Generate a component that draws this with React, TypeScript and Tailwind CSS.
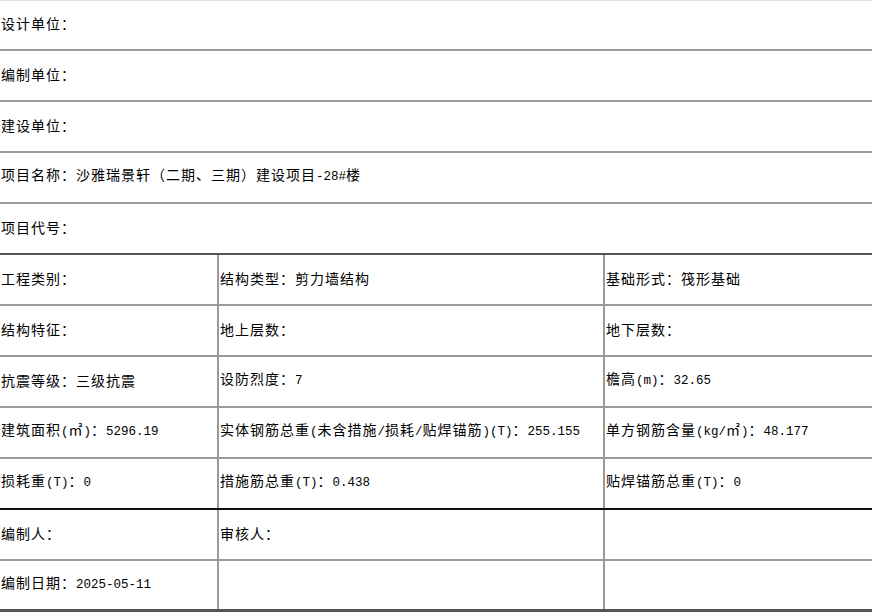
import React from "react";

const font = { fontFamily: '"Noto Sans CJK SC", "Liberation Sans", sans-serif' };

function T({ text }: { text: string }) {
  const parts = text.match(/[\x20-\x7e]+|[^\x20-\x7e]+/g) || [];
  return (
    <span className="whitespace-pre">
      {parts.map((p, i) =>
        /^[\x20-\x7e]+$/.test(p) ? (
          <span
            key={i}
            className="text-[12.5px] tracking-normal"
            style={{ fontFamily: '"Liberation Mono", monospace' }}
          >
            {p}
          </span>
        ) : (
          <span key={i}>{p}</span>
        )
      )}
    </span>
  );
}

function FullRow({ text, border = "border-[#9a9a9a]", h = "h-[51px]" }: { text: string; border?: string; h?: string }) {
  return (
    <div className={`${h} flex items-center pl-[1px] pb-[4px] border-b-2 ${border}`}>
      <T text={text} />
    </div>
  );
}

function Row3({ cells, border = "border-[#9a9a9a]" }: { cells: string[]; border?: string }) {
  return (
    <div className={`h-[51px] grid grid-cols-[219px_386px_1fr] border-b-2 ${border}`}>
      <div className="flex items-center pl-[1px] pb-[4px] border-r-2 border-[#9a9a9a]"><T text={cells[0]} /></div>
      <div className="flex items-center pl-[1px] pb-[4px] border-r-2 border-[#9a9a9a]"><T text={cells[1]} /></div>
      <div className="flex items-center pl-[1px] pb-[4px]"><T text={cells[2]} /></div>
    </div>
  );
}

export default function App() {
  return (
    <div className="w-[872px] h-[615px] bg-white text-black text-[14px] tracking-[1px] leading-none overflow-hidden" style={font}>
      <div className="border-t border-[#e4e4e4]">
        <FullRow text="设计单位：" h="h-[50px]" />
        <FullRow text="编制单位：" />
        <FullRow text="建设单位：" />
        <FullRow text="项目名称：沙雅瑞景轩（二期、三期）建设项目-28#楼" />
        <FullRow text="项目代号：" border="border-[#555]" />
        <Row3 cells={["工程类别：", "结构类型：剪力墙结构", "基础形式：筏形基础"]} />
        <Row3 cells={["结构特征：", "地上层数：", "地下层数："]} />
        <Row3 cells={["抗震等级：三级抗震", "设防烈度：7", "檐高(m)：32.65"]} />
        <Row3 cells={["建筑面积(㎡)：5296.19", "实体钢筋总重(未含措施/损耗/贴焊锚筋)(T)：255.155", "单方钢筋含量(kg/㎡)：48.177"]} />
        <Row3 cells={["损耗重(T)：0", "措施筋总重(T)：0.438", "贴焊锚筋总重(T)：0"]} border="border-[#111]" />
        <Row3 cells={["编制人：", "审核人：", ""]} />
        <div className="h-[51px] grid grid-cols-[219px_386px_1fr] border-b-[3px] border-[#555]">
          <div className="flex items-center pl-[1px] pb-[4px] border-r-2 border-[#9a9a9a]"><T text="编制日期：2025-05-11" /></div>
          <div className="border-r-2 border-[#9a9a9a]"></div>
          <div></div>
        </div>
      </div>
    </div>
  );
}
